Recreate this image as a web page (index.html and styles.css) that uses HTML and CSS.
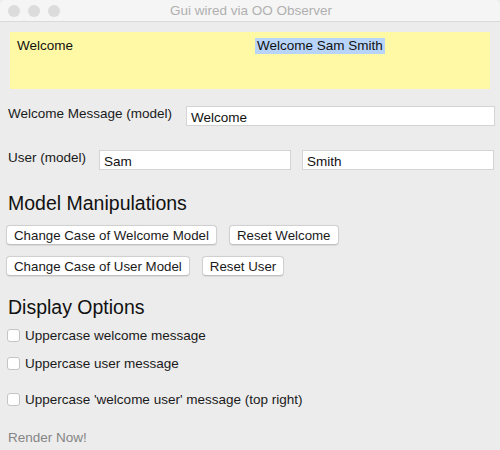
FILE: index.html
```html
<!DOCTYPE html>
<html>
<head>
<meta charset="utf-8">
<link rel="stylesheet" href="styles.css">
</head>
<body>
<div class="window">
  <div class="titlebar">
    <div class="lights"><span class="light"></span><span class="light"></span><span class="light"></span></div>
    <div class="title">Gui wired via OO Observer</div>
  </div>
  <div class="content">
    <div class="panel">
      <div class="cell">Welcome</div>
      <div class="cell"><span class="sel">Welcome Sam Smith</span></div>
    </div>
    <div class="row row-msg">
      <label class="lbl">Welcome Message (model)</label>
      <input class="field field-msg" type="text" value="Welcome">
    </div>
    <div class="row row-user">
      <label class="lbl">User (model)</label>
      <input class="field field-first" type="text" value="Sam">
      <input class="field field-last" type="text" value="Smith">
    </div>
    <h2 class="heading h-model">Model Manipulations</h2>
    <div class="btnrow">
      <button class="btn">Change Case of Welcome Model</button>
      <button class="btn">Reset Welcome</button>
    </div>
    <div class="btnrow btnrow2">
      <button class="btn">Change Case of User Model</button>
      <button class="btn">Reset User</button>
    </div>
    <h2 class="heading h-display">Display Options</h2>
    <div class="check c1"><span class="box"></span><span>Uppercase welcome message</span></div>
    <div class="check c2"><span class="box"></span><span>Uppercase user message</span></div>
    <div class="check c3"><span class="box"></span><span>Uppercase 'welcome user' message (top right)</span></div>
    <div class="render">Render Now!</div>
  </div>
</div>
</body>
</html>
```
FILE: styles.css
```css
html, body {
  margin: 0;
  padding: 0;
  background: #ececec;
}
.window {
  width: 500px;
  height: 450px;
  background: #ececec;
  font-family: "Liberation Sans", Arial, sans-serif;
  font-size: 13px;
  color: #1a1a1a;
  overflow: hidden;
  border-radius: 5px 5px 0 0;
}
.titlebar {
  height: 21px;
  background: #f5f5f5;
  border-bottom: 1px solid #dadada;
  position: relative;
  display: flex;
  align-items: center;
  justify-content: center;
}
.lights {
  position: absolute;
  left: 8px;
  top: 5px;
  display: flex;
  gap: 8px;
}
.light {
  width: 12px;
  height: 12px;
  border-radius: 50%;
  background: #dcdcdc;
}
.title {
  color: #b0b0b0;
  font-size: 13.5px;
  padding-left: 2px;
}
.content {
  padding: 10px 6px 0 6px;
}
.panel {
  margin-left: 4px;
  width: 480px;
  height: 57px;
  background: #fff9a5;
  display: grid;
  grid-template-columns: 240px 240px;
  box-sizing: border-box;
}
.cell {
  padding: 6px 0 0 7px;
  font-size: 13.5px;
  color: #111;
  line-height: 15px;
}
.cell .sel {
  background: #b8d5f9;
  padding: 0 2px 1px 2px;
  margin-left: -2px;
}
.row {
  display: flex;
  align-items: center;
}
.row-msg {
  margin-top: 17px;
}
.row-user {
  margin-top: 24px;
}
.lbl {
  padding-left: 2px;
  font-size: 13.5px;
  margin-top: -6px;
  white-space: nowrap;
  flex-shrink: 0;
}
.field {
  height: 20px;
  box-sizing: border-box;
  border: 1px solid #d4d4d4;
  background: #fff;
  font-family: "Liberation Sans", Arial, sans-serif;
  font-size: 13.5px;
  padding: 2px 4px 0 4px;
  color: #111;
  margin: 0;
  outline: none;
  flex-shrink: 0;
}
.field-msg {
  margin-left: auto;
  margin-right: -1px;
  width: 309px;
}
.field-first {
  margin-left: auto;
  width: 192px;
}
.field-last {
  margin-left: 11px;
  width: 192px;
}
.heading {
  margin: 0;
  font-weight: normal;
  font-size: 19.5px;
  color: #111;
  padding-left: 2px;
  line-height: 22px;
}
.h-model {
  margin-top: 22px;
}
.h-display {
  margin-top: 20px;
}
.btnrow {
  display: flex;
  gap: 12px;
  margin-top: 11px;
}
.btnrow2 {
  margin-top: 11px;
}
.btn {
  height: 20px;
  box-sizing: border-box;
  background: #fff;
  border: 1px solid #d0d0d0;
  border-bottom-color: #c0c0c0;
  border-radius: 4px;
  font-family: "Liberation Sans", Arial, sans-serif;
  font-size: 13.3px;
  color: #1a1a1a;
  padding: 0 7px;
  margin: 0;
  line-height: 17px;
  box-shadow: 0 0.5px 1px rgba(0,0,0,0.08);
}
.check {
  display: flex;
  align-items: center;
  gap: 5px;
  font-size: 13.5px;
  padding-left: 1px;
  height: 16px;
}
.c1 { margin-top: 9px; }
.c2 { margin-top: 12px; }
.c3 { margin-top: 20px; }
.box {
  width: 13px;
  height: 13px;
  box-sizing: border-box;
  background: #fff;
  border: 1px solid #c4c4c4;
  border-radius: 3px;
}
.render {
  margin-top: 23px;
  padding-left: 2px;
  color: #858585;
  font-size: 13.5px;
}
```
